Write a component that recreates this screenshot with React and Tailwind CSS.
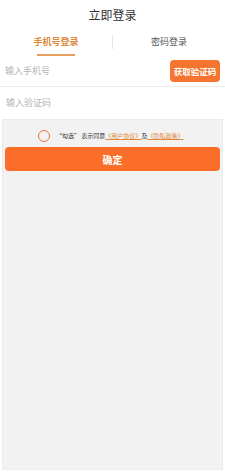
import React, { useState } from "react";

const font = { fontFamily: '"Noto Sans CJK SC", "Noto Sans", sans-serif' };

export default function App() {
  const [tab, setTab] = useState("phone");
  const [agree, setAgree] = useState(false);

  return (
    <div className="w-[225px] h-[473px] bg-white flex flex-col overflow-hidden" style={font}>
      <div className="h-[30px] pt-[6px] flex justify-center text-[12px] leading-[18px] text-[#333]">
        立即登录
      </div>

      <div className="flex items-center h-[26px]">
        <button
          onClick={() => setTab("phone")}
          className="flex-1 flex flex-col items-center pt-[5px]"
        >
          <span
            className={
              "text-[9px] leading-[12px] " +
              (tab === "phone" ? "text-[#e0893c] font-bold" : "text-[#555]")
            }
          >
            手机号登录
          </span>
          <span
            className={
              "mt-[6px] h-[2px] w-[38px] " +
              (tab === "phone" ? "bg-[#e8a060]" : "bg-transparent")
            }
          />
        </button>
        <div className="w-px h-[14px] bg-[#e5e5e5] mb-[2px]" />
        <button
          onClick={() => setTab("pwd")}
          className="flex-1 flex flex-col items-center pt-[5px]"
        >
          <span
            className={
              "text-[9px] leading-[12px] " +
              (tab === "pwd" ? "text-[#e0893c] font-bold" : "text-[#555]")
            }
          >
            密码登录
          </span>
          <span
            className={
              "mt-[6px] h-[2px] w-[30px] " +
              (tab === "pwd" ? "bg-[#e8a060]" : "bg-transparent")
            }
          />
        </button>
      </div>

      <div className="flex items-center h-[31px] pl-[5px] pr-[5px] border-b border-[#ececec]">
        <input
          placeholder="输入手机号"
          className="flex-1 min-w-0 text-[9px] outline-none placeholder:text-[#b5b5b5] caret-[#e0893c]"
          style={font}
        />
        <button className="w-[50px] h-[22px] rounded-[4px] bg-[#f47430] text-white text-[8.5px] font-bold shrink-0">
          获取验证码
        </button>
      </div>

      <div className="flex items-center h-[32px] pl-[6px]">
        <input
          placeholder="输入验证码"
          className="flex-1 min-w-0 text-[9px] outline-none placeholder:text-[#b5b5b5]"
          style={font}
        />
      </div>

      <div className="flex-1 mx-[2px] mb-[3px] bg-[#f2f2f2] border border-[#ebebeb] flex flex-col">
        <div className="flex items-start h-[27px] pt-[10px] pl-[35px]">
          <button
            onClick={() => setAgree(!agree)}
            className={
              "w-[12px] h-[12px] rounded-full border-[1.5px] border-[#e3733a] shrink-0 " +
              (agree ? "bg-[#e3733a]" : "")
            }
          />
          <span className="ml-[6px] mt-[1px] text-[6px] leading-[10px] text-[#333] whitespace-nowrap">
            “勾选” 表示同意
            <span className="text-[#e0893c] underline">《用户协议》</span>
            及
            <span className="text-[#e0893c] underline">《隐私政策》</span>
          </span>
        </div>
        <button className="mx-[2px] h-[24px] rounded-[4px] bg-[#fa6e2a] text-white text-[10px] font-bold">
          确定
        </button>
      </div>
    </div>
  );
}
